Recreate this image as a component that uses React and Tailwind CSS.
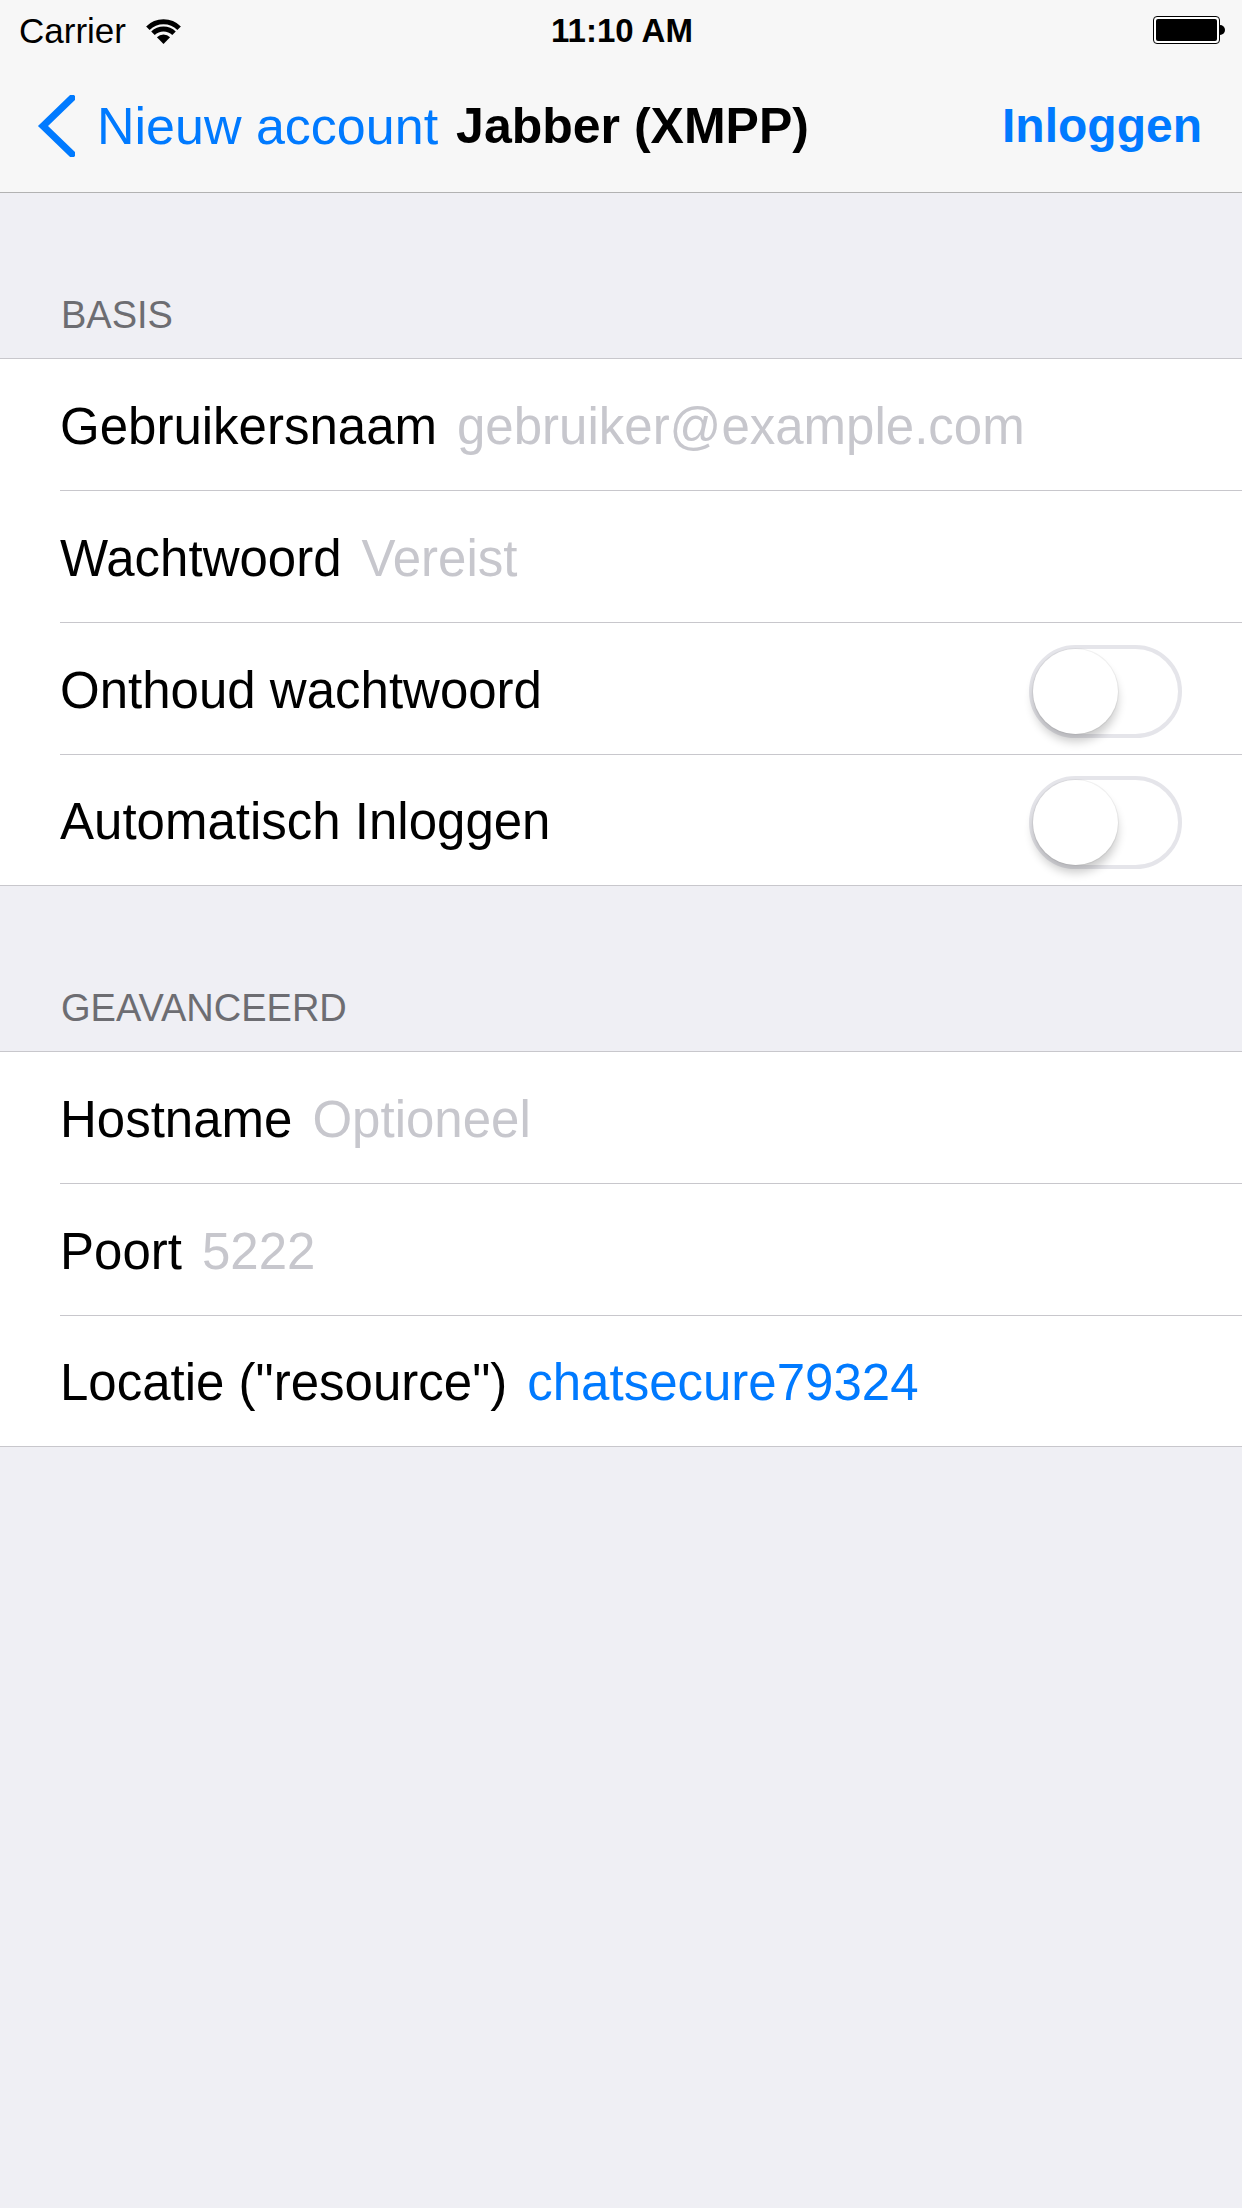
import React from "react";

const basisRows = [
    { label: "Gebruikersnaam", value: "gebruiker@example.com", kind: "placeholder" },
    { label: "Wachtwoord", value: "Vereist", kind: "placeholder" },
    { label: "Onthoud wachtwoord", kind: "toggle" },
    { label: "Automatisch Inloggen", kind: "toggle" },
];

const advancedRows = [
    { label: "Hostname", value: "Optioneel", kind: "placeholder" },
    { label: "Poort", value: "5222", kind: "placeholder" },
    { label: 'Locatie ("resource")', value: "chatsecure79324", kind: "link" },
];

const WifiIcon = () => (
    <svg width="37" height="28" viewBox="0 0 36 27" className="ml-[19px]">
        <path d="M18 27 L11.6 20.6 A9 9 0 0 1 24.4 20.6 Z" fill="black" />
        <path d="M7.75 16.75 A14.5 14.5 0 0 1 28.25 16.75" stroke="black" strokeWidth="4.8" fill="none" />
        <path d="M2.8 11.8 A21.5 21.5 0 0 1 33.2 11.8" stroke="black" strokeWidth="4.8" fill="none" />
    </svg>
);

const Battery = () => (
    <div className="flex items-center">
        <div className="w-[67px] h-[28px] rounded-[4px] border-[1.5px] border-black p-[2px] bg-white">
            <div className="w-full h-full rounded-[2px] bg-black" />
        </div>
        <div className="w-[5px] h-[10px] rounded-r-full bg-black" />
    </div>
);

const Toggle = () => (
    <div className="w-[153px] h-[93px] rounded-full border-[4px] border-[#e5e5ea] bg-white flex items-center">
        <div className="w-[85px] h-[85px] rounded-full bg-white shadow-[0_8px_10px_rgba(0,0,0,0.2),0_0_0_1px_rgba(0,0,0,0.05)]" />
    </div>
);

const SectionHeader = ({ title }) => (
    <div className="h-[165px] flex items-end pl-[61px] pb-[24px]">
        <span className="text-[38px] leading-[38px] text-[#6d6d72]">{title}</span>
    </div>
);

const Group = ({ rows }) => (
    <div className="bg-white border-t border-b border-[#c8c7cc]">
        {rows.map((row, i) => {
            const last = i === rows.length - 1;
            return (
                <div key={i} className="pl-[60px]">
                    <div
                        className={
                            "flex items-center pt-[5px] pr-[60px] " +
                            (last ? "h-[130px]" : "h-[132px] border-b border-[#c8c7cc]")
                        }
                    >
                        <span className="text-[51px] text-black">{row.label}</span>
                        {row.kind === "placeholder" && (
                            <span className="ml-[20px] text-[51px] text-[#c7c7cd]">{row.value}</span>
                        )}
                        {row.kind === "link" && (
                            <span className="ml-[20px] text-[51px] text-[#007aff]">{row.value}</span>
                        )}
                        {row.kind === "toggle" && (
                            <>
                                <div className="flex-1" />
                                <Toggle />
                            </>
                        )}
                    </div>
                </div>
            );
        })}
    </div>
);

export default function App() {
    return (
        <div className="w-[1242px] h-[2208px] bg-[#efeff4] font-['Liberation_Sans',Arial,sans-serif] overflow-hidden">
            {/* status + nav bar */}
            <div className="bg-[#f7f7f7] border-b border-[#b2b2b2]">
                <div className="h-[60px] grid grid-cols-[1fr_auto_1fr] items-center pl-[19px] pr-[17px]">
                    <div className="flex items-center">
                        <span className="text-[35px] leading-none text-black">Carrier</span>
                        <WifiIcon />
                    </div>
                    <span className="text-[33px] leading-none font-bold text-black">11:10 AM</span>
                    <div className="flex justify-end">
                        <Battery />
                    </div>
                </div>
                <div className="h-[132px] flex items-center pl-[37px] pr-[40px]">
                    <svg width="38" height="62" viewBox="0 0 38 62">
                        <path d="M35 3 L6 31 L35 59" stroke="#007aff" strokeWidth="7" fill="none" strokeLinecap="square" />
                    </svg>
                    <span className="ml-[22px] text-[52px] text-[#007aff]">Nieuw account</span>
                    <span className="ml-[18px] text-[50px] font-bold text-black">Jabber (XMPP)</span>
                    <div className="flex-1" />
                    <span className="text-[48px] font-bold text-[#007aff]">Inloggen</span>
                </div>
            </div>

            <SectionHeader title="BASIS" />
            <Group rows={basisRows} />

            <SectionHeader title="GEAVANCEERD" />
            <Group rows={advancedRows} />
        </div>
    );
}
